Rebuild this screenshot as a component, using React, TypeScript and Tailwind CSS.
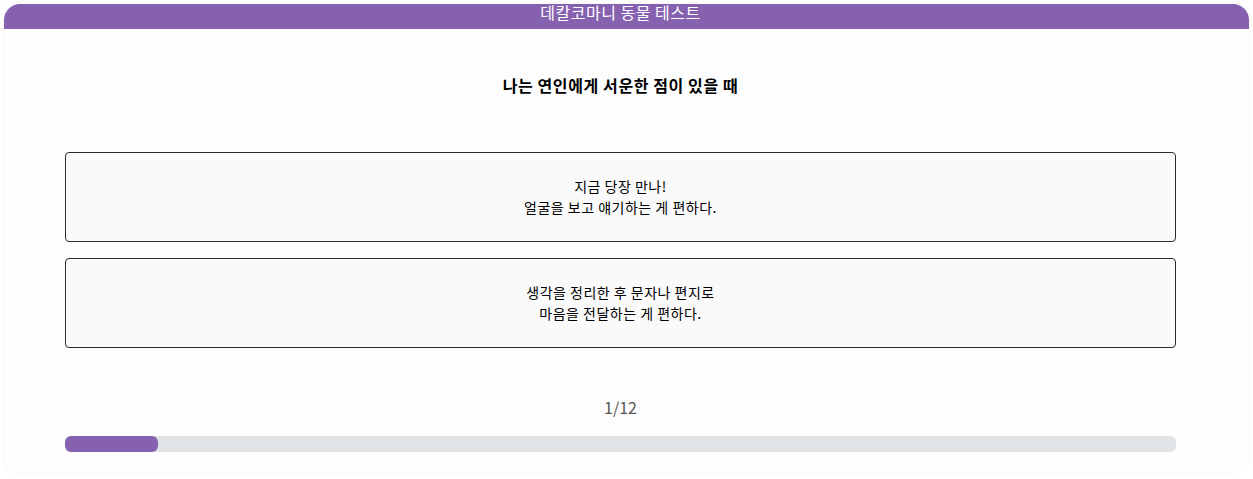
/**
 * 데칼코마니 동물 테스트 - 질문 화면
 */

const QUESTION = {
  title: '나는 연인에게 서운한 점이 있을 때',
  answers: [
    ['지금 당장 만나!', '얼굴을 보고 얘기하는 게 편하다.'],
    ['생각을 정리한 후 문자나 편지로', '마음을 전달하는 게 편하다.'],
  ],
};

const STEP = 1;
const TOTAL = 12;

export default function App() {
  return (
    <div
      className="min-h-screen bg-white px-1 pt-1 pb-2"
      style={{ fontFamily: '"Noto Sans CJK KR", "Noto Sans", sans-serif' }}
    >
      <div className="rounded-2xl bg-[#fdfdfd] shadow-[0_0_6px_rgba(0,0,0,0.05)] pb-[19px]">
        {/* 헤더 */}
        <div className="h-[25px] rounded-t-2xl bg-[#8661b0] pl-[61px] pr-[73px] text-center text-white text-[16px] leading-[17px] tracking-[0.5px]">
          데칼코마니 동물 테스트
        </div>

        <div className="pl-[61px] pr-[73px]">
          {/* 질문 */}
          <h2 className="mt-[44px] text-center text-[16px] font-bold leading-6 tracking-[0.6px] text-black">
            {QUESTION.title}
          </h2>

          {/* 답변 */}
          <div className="mt-[55px] flex flex-col gap-4">
            {QUESTION.answers.map((lines, i) => (
              <button
                key={i}
                className="flex h-[90px] w-full flex-col items-center justify-center rounded border border-[#2b2b2b] bg-[#fafafa] text-[14px] leading-[21px] tracking-[0.5px] text-black"
              >
                {lines.map((l) => (
                  <span key={l}>{l}</span>
                ))}
              </button>
            ))}
          </div>

          {/* 진행도 */}
          <div className="mt-[47px] text-center text-[16px] leading-6 text-[#555]">
            {STEP}/{TOTAL}
          </div>
          <div className="mt-[17px] h-4 w-full rounded-md bg-[#e1e4e7]">
            <div
              className="h-4 rounded-md bg-[#8661b0]"
              style={{ width: `${(STEP / TOTAL) * 100}%` }}
            />
          </div>
        </div>
      </div>
    </div>
  );
}
